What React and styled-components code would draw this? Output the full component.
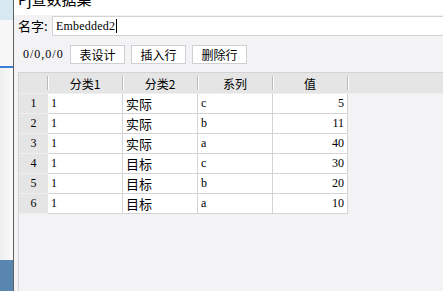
import React from "react";
import styled, { createGlobalStyle } from "styled-components";

/* STYLE(CSS)*/

const Global = createGlobalStyle`
  html, body {
    margin: 0;
    padding: 0;
    width: 443px;
    height: 291px;
    overflow: hidden;
    background: #ffffff;
  }
`;

const Screen = styled.div`
  display: flex;
  width: 443px;
  height: 291px;
  overflow: hidden;
`;

const Backdrop = styled.div`
  width: 13px;
  flex-shrink: 0;
  display: flex;
  flex-direction: column;
  background: linear-gradient(to right, #eeeeee, #fafafa);
`;
const BackTint = styled.div`
  height: ${(p) => p.h}px;
  background: ${(p) => p.bg};
  flex-shrink: 0;
`;
const BackFill = styled.div`
  flex: 1;
`;

const Dialog = styled.div`
  flex: 1;
  display: flex;
  flex-direction: column;
  min-width: 0;
  background: #f3f3f5;
  border-left: 1px solid #5e5e5e;
  font-family: "Noto Sans CJK SC", "Noto Sans", sans-serif;
  color: #000;
`;

const TitleBar = styled.div`
  height: 15px;
  flex-shrink: 0;
  background: #ffffff;
  overflow: hidden;
  padding-left: 4px;
`;
const Title = styled.div`
  margin-top: -9px;
  font-size: 15px;
  line-height: 16px;
  white-space: nowrap;
`;

const NameRow = styled.div`
  display: flex;
  align-items: center;
  padding-left: 4px;
  margin-top: 1px;
`;
const Label = styled.span`
  width: 34px;
  font-size: 13px;
  line-height: 20px;
`;
const NameInput = styled.div`
  flex: 1;
  height: 18px;
  display: flex;
  align-items: center;
  padding-left: 3px;
  background: #ffffff;
  border: 1px solid #d2d2d2;
  border-right: none;
  font-family: "Liberation Serif", serif;
  font-size: 12px;
  letter-spacing: 0.2px;
`;
const Caret = styled.span`
  width: 1px;
  height: 14px;
  margin-left: 1px;
  background: #000;
`;

const Toolbar = styled.div`
  display: flex;
  align-items: center;
  gap: 6px;
  padding-left: 9px;
  margin-top: 9px;
`;
const Counter = styled.span`
  width: 41px;
  font-family: "Liberation Serif", serif;
  font-size: 12px;
  letter-spacing: 1px;
  white-space: nowrap;
`;
const Button = styled.div`
  width: 53px;
  height: 17px;
  display: flex;
  align-items: center;
  justify-content: center;
  background: #ffffff;
  border: 1px solid #cfcfcf;
  font-size: 12px;
`;

const Grid = styled.div`
  flex: 1;
  margin-top: 8px;
  margin-left: 4px;
  border-top: 1px solid #d3d3d3;
  border-left: 1px solid #d3d3d3;
  background: #f3f3f5;
  display: flex;
  flex-direction: column;
`;
const HeaderRow = styled.div`
  display: flex;
  height: 20px;
  background: #e5e5e5;
  border-bottom: 1px solid #efefef;
`;
const HeadCell = styled.div`
  width: ${(p) => p.w}px;
  display: flex;
  align-items: center;
  font-size: 12px;
`;
const HeadLabel = styled.span`
  flex: 1;
  text-align: center;
  font-family: "Noto Sans CJK SC", sans-serif;
`;
const Sep = styled.span`
  width: 1px;
  height: 14px;
  background: #b9b9b9;
  box-shadow: 1px 0 0 #ffffff;
`;

const Row = styled.div`
  display: flex;
  height: 20px;
`;
const RowHead = styled.div`
  width: 29px;
  display: flex;
  align-items: center;
  justify-content: center;
  background: #e5e5e5;
  border-bottom: 1px solid #efefef;
  font-family: "Liberation Serif", serif;
  font-size: 12px;
  box-sizing: border-box;
`;
const Cell = styled.div`
  width: 75px;
  box-sizing: border-box;
  display: flex;
  align-items: center;
  justify-content: ${(p) => (p.right ? "flex-end" : "flex-start")};
  padding: 0 ${(p) => (p.right ? "3px" : "0")} 0 ${(p) => (p.right ? "0" : "3px")};
  background: #ffffff;
  border-right: 1px solid #d4d4d4;
  border-bottom: 1px solid #d4d4d4;
  font-family: ${(p) =>
    p.cjk ? `"Noto Sans CJK SC", sans-serif` : `"Liberation Serif", serif`};
  font-size: ${(p) => (p.cjk ? "13px" : "12px")};
`;

const columns = ["分类1", "分类2", "系列", "值"];
const rows = [
  ["1", "实际", "c", "5"],
  ["1", "实际", "b", "11"],
  ["1", "实际", "a", "40"],
  ["1", "目标", "c", "30"],
  ["1", "目标", "b", "20"],
  ["1", "目标", "a", "10"],
];

function App() {
  return (
    <>
      <Global />
      <Screen>
        <Backdrop>
          <BackTint h={20} bg="#d7e8f3" />
          <BackTint h={46} bg="#f7f7f7" />
          <BackTint h={2} bg="#3b7fd9" />
          <BackFill />
          <BackTint h={31} bg="#5886b0" />
        </Backdrop>
        <Dialog>
          <TitleBar>
            <Title>Pj查数据集</Title>
          </TitleBar>
          <NameRow>
            <Label>名字:</Label>
            <NameInput>
              Embedded2
              <Caret />
            </NameInput>
          </NameRow>
          <Toolbar>
            <Counter>0/0,0/0</Counter>
            <Button>表设计</Button>
            <Button>插入行</Button>
            <Button>删除行</Button>
          </Toolbar>
          <Grid>
            <HeaderRow>
              <HeadCell w={29}>
                <HeadLabel />
                <Sep />
              </HeadCell>
              {columns.map((c) => (
                <HeadCell key={c} w={75}>
                  <HeadLabel>{c}</HeadLabel>
                  <Sep />
                </HeadCell>
              ))}
            </HeaderRow>
            {rows.map((r, i) => (
              <Row key={i}>
                <RowHead>{i + 1}</RowHead>
                <Cell>{r[0]}</Cell>
                <Cell cjk>{r[1]}</Cell>
                <Cell>{r[2]}</Cell>
                <Cell right>{r[3]}</Cell>
              </Row>
            ))}
          </Grid>
        </Dialog>
      </Screen>
    </>
  );
}

export default App;
